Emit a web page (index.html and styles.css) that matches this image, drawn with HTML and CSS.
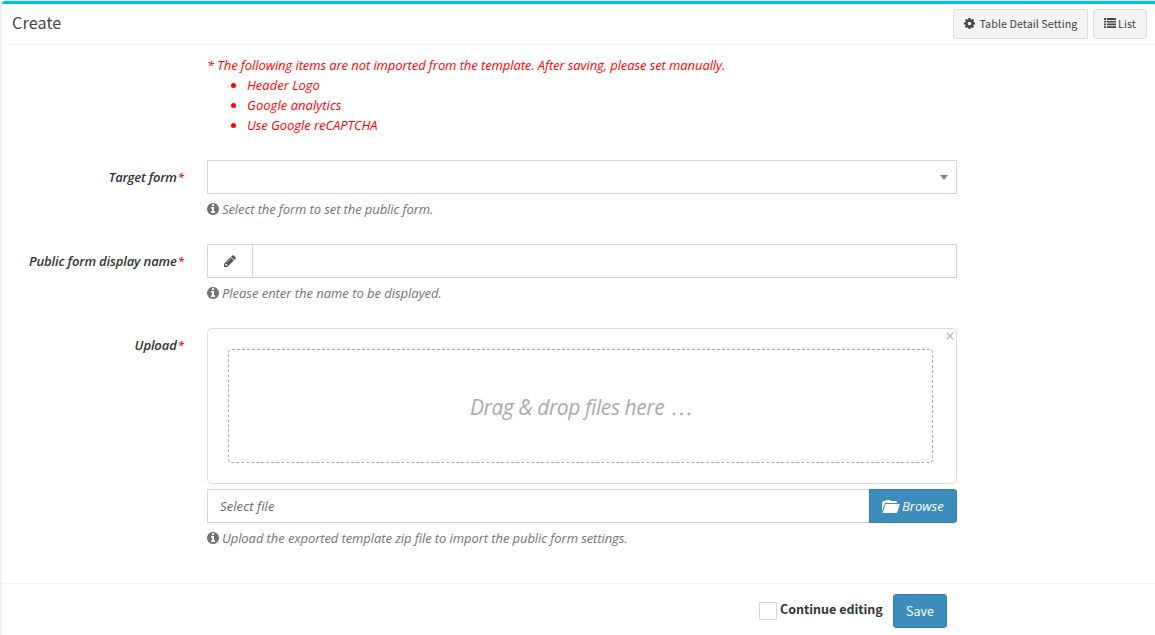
FILE: index.html
```html
<!DOCTYPE html>
<html lang="en">
<head>
<meta charset="utf-8">
<title>Create</title>
<link rel="stylesheet" href="styles.css">
</head>
<body>
<svg class="symbols" width="0" height="0">
  <symbol id="info" viewBox="128 128 1536 1536"><path d="M1152 1376v-160q0-14-9-23t-23-9h-96v-512q0-14-9-23t-23-9h-320q-14 0-23 9t-9 23v160q0 14 9 23t23 9h96v320h-96q-14 0-23 9t-9 23v160q0 14 9 23t23 9h448q14 0 23-9t9-23zm-128-896v-160q0-14-9-23t-23-9h-192q-14 0-23 9t-9 23v160q0 14 9 23t23 9h192q14 0 23-9t9-23zm640 416q0 209-103 385.5t-279.5 279.5-385.5 103-385.5-103-279.5-279.5-103-385.5 103-385.5 279.5-279.5 385.5-103 385.5 103 279.5 279.5 103 385.5z"/></symbol>
</svg>
<main class="box">
  <header class="box-header">
    <h1 class="title"><span class="t-title">Create</span></h1>
    <div class="tools">
      <a class="tool tool-setting"><svg class="cog" viewBox="128 128 1536 1536"><path d="M1152 896q0-106-75-181t-181-75-181 75-75 181 75 181 181 75 181-75 75-181zm512-109v222q0 12-8 23t-20 13l-185 28q-19 54-39 91 35 50 107 138 10 12 10 25t-9 23q-27 37-99 108t-94 71q-12 0-26-9l-138-108q-44 23-91 38-16 136-29 186-7 28-36 28h-222q-14 0-24.5-8.5t-11.5-21.5l-28-184q-49-16-90-37l-141 107q-10 9-25 9-14 0-25-11-126-114-165-168-7-10-7-23 0-12 8-23 15-21 51-66.5t54-70.5q-27-50-41-99l-183-27q-13-2-21-12.5t-8-23.5v-222q0-12 8-23t19-13l186-28q14-46 39-92-40-57-107-138-10-12-10-24 0-10 9-23 26-36 98.5-107.5t94.5-71.5q13 0 26 10l138 107q44-23 91-38 16-136 29-186 7-28 36-28h222q14 0 24.5 8.5t11.5 21.5l28 184q49 16 90 37l142-107q9-9 24-9 13 0 25 10 129 119 165 170 7 8 7 22 0 12-8 23-15 21-51 66.5t-54 70.5q26 50 41 98l183 28q13 2 21 12.5t8 23.5z"/></svg><span class="t-tool">Table Detail Setting</span></a>
      <a class="tool tool-list"><svg class="list" viewBox="0 0 12 10"><path d="M0 0h2v2H0zM3 0h9v2H3zM0 3h2v1.5H0zM3 3h9v1.5H3zM0 5.6h2v1.6H0zM3 5.6h9v1.6H3zM0 8.2h2V10H0zM3 8.2h9V10H3z"/></svg><span class="t-tool">List</span></a>
    </div>
  </header>
  <form class="form">
    <section class="note">
      <p class="note-line"><span class="t-note">* The following items are not imported from the template. After saving, please set manually.</span></p>
      <ul class="note-list">
        <li><span class="t-logo">Header Logo</span></li>
        <li><span class="t-analytics">Google analytics</span></li>
        <li><span class="t-captcha">Use Google reCAPTCHA</span></li>
      </ul>
    </section>
    <section class="row">
      <label class="label"><span class="t-target">Target form</span><b class="req">*</b></label>
      <div class="field">
        <div class="control select"><i class="caret"></i></div>
        <p class="help"><svg class="info"><use href="#info"/></svg><span class="t-help1">Select the form to set the public form.</span></p>
      </div>
    </section>
    <section class="row">
      <label class="label"><span class="t-public">Public form display name</span><b class="req">*</b></label>
      <div class="field">
        <div class="control"><span class="addon"><svg class="pencil" viewBox="128 128 1536 1536"><path d="M491 1536l91-91-235-235-91 91v107h128v128h107zm523-928q0-22-22-22-10 0-17 7l-542 542q-7 7-7 17 0 22 22 22 10 0 17-7l542-542q7-7 7-17zm-54-192l416 416-832 832h-416v-416zm683 96q0 53-37 90l-166 166-416-416 166-165q36-38 90-38 53 0 91 38l235 234q37 39 37 91z"/></svg></span></div>
        <p class="help"><svg class="info"><use href="#info"/></svg><span class="t-help2">Please enter the name to be displayed.</span></p>
      </div>
    </section>
    <section class="row upload-row">
      <label class="label"><span class="t-upload">Upload</span><b class="req">*</b></label>
      <div class="field">
        <div class="preview">
          <svg class="close" viewBox="0 0 8 8"><path d="M.6.6l6.8 6.8M7.4.6L.6 7.4"/></svg>
          <div class="drop"><span class="t-drop">Drag &amp; drop files here <span class="dots">…</span></span></div>
        </div>
        <div class="file">
          <div class="file-name"><span class="t-select">Select file</span></div>
          <div class="browse"><svg class="folder" viewBox="0 0 18 13"><path d="M0 11V2.2L1.2 1H3L4 0h4l1 1h5.3l.7 1v1H3.2zM3.7 4H18l-3 9H.6z"/></svg><span class="t-browse">Browse</span></div>
        </div>
        <p class="help"><svg class="info"><use href="#info"/></svg><span class="t-help3">Upload the exported template zip file to import the public form settings.</span></p>
      </div>
    </section>
  </form>
  <footer class="footer">
    <label class="check"><i class="tick"></i><span class="t-continue">Continue editing</span></label>
    <div class="save"><span class="t-save">Save</span></div>
  </footer>
</main>
</body>
</html>
```
FILE: styles.css
```css
* { box-sizing: border-box; }
body {
  margin: 0;
  height: 635px;
  overflow: hidden;
  padding: 1px 0 0 2px;
  background: #ecf0f5;
  color: #333;
  font: 12.5px/20px "Noto Sans CJK JP", "Noto Sans", sans-serif;
}
svg { display: block; flex: none; fill: currentColor; }
.symbols { position: absolute; }
p, ul, h1 { margin: 0; padding: 0; }
span { white-space: nowrap; }
.box { height: 634px; background: #fff; border-top: 3px solid #00c0ef; border-radius: 3px 0 0 0; }
.box-header { height: 41px; display: flex; justify-content: space-between; padding: 5px 8px 0 10px; border-bottom: 1px solid #f4f4f4; }
.title { font-size: 16.2px; font-weight: 400; line-height: 26px; color: #444; }
.t-title { letter-spacing: .1px; }
.tools { display: flex; gap: 5px; }
.tool { height: 30px; display: flex; align-items: center; padding-bottom: 2px; background: #f4f4f4; border: 1px solid #ddd; border-radius: 3px; color: #444; font-size: 10.8px; line-height: 18px; }
.tool-setting { width: 135px; padding-left: 10px; gap: 4.5px; border-radius: 3px 0 0 3px; }
.tool-list { width: 54px; padding-left: 10px; gap: 2px; }
.t-tool { letter-spacing: .03px; }
.cog { width: 11px; height: 11px; margin-top: 1px; }
.list { width: 12px; height: 10px; }

.form { height: 538px; padding-top: 10px; font-family: "Open Sans", "Noto Sans", sans-serif; font-size: 13px; font-style: italic; }
.note { height: 105px; padding-left: 205px; color: #f00; }
.note-list { padding-left: 40px; }
.t-note { letter-spacing: -.085px; }
.t-analytics { letter-spacing: .04px; }
.t-captcha { letter-spacing: -.06px; }
.row { height: 84px; display: grid; grid-template-columns: 182px 750px; column-gap: 23px; }
.upload-row { height: 239px; }
.label { display: flex; justify-content: flex-end; padding-top: 7px; color: #333; font-weight: 600; }
.t-target { letter-spacing: -.2px; }
.t-public { letter-spacing: -.13px; }
.t-upload { letter-spacing: -.1px; }
.req { margin-left: 1px; color: #f00; font-size: 11.5px; font-weight: 600; }
.control { height: 34px; border: 1px solid #d2d2e0; display: flex; align-items: center; }
.select { justify-content: flex-end; padding-right: 8px; }
.caret { border: 4px solid transparent; border-top: 5px solid #888; border-bottom: 0; }
.addon { width: 45px; height: 32px; display: flex; align-items: center; justify-content: center; border-right: 1px solid #d2d2e0; color: #555; }
.pencil { width: 12px; height: 12px; }
.help { display: flex; align-items: center; gap: 3px; margin-top: 5px; color: #737373; }
.t-help1 { letter-spacing: -.1px; }
.t-help2 { letter-spacing: -.03px; }
.t-help3 { letter-spacing: -.08px; }
.info { width: 12px; height: 12px; }
.preview { position: relative; height: 156px; padding: 20px 23px 20px 20px; border: 1px solid #ddd; border-radius: 5px; }
.close { position: absolute; top: 3px; right: 2px; width: 8px; height: 8px; fill: none; stroke: #bbb; stroke-width: 1.4; }
.drop { height: 114px; display: flex; align-items: center; justify-content: center; padding-top: 2px; border: 1px dashed #aaa; border-radius: 4px; color: #aaa; font-size: 21px; }
.t-drop { letter-spacing: -.42px; }
.dots { margin-left: 1px; font-family: "Noto Sans CJK JP", sans-serif; font-size: 20px; }
.file { height: 34px; display: flex; margin-top: 5px; }
.file-name { flex: 1; padding: 6px 12px; border: 1px solid #d2d2e0; border-right: 0; color: #666; }
.t-select { letter-spacing: .1px; }
.browse { width: 88px; display: flex; align-items: center; gap: 2px; padding-left: 12px; background: #3c8dbc; border: 1px solid #367fa9; border-radius: 0 3px 3px 0; color: #fff; }
.folder { width: 18px; height: 13px; }
.footer { height: 52px; display: flex; padding: 10px 0 0 757px; border-top: 1px solid #f4f4f4; }
.check { width: 134px; display: flex; gap: 3px; font-weight: 700; }
.t-continue { line-height: 30px; }
.tick { width: 18px; height: 18px; margin-top: 8px; border: 1px solid #d5d5d5; }
.save { width: 54px; height: 34px; display: flex; align-items: center; justify-content: center; background: #3c8dbc; border: 1px solid #367fa9; border-radius: 3px; color: #fff; }
```
